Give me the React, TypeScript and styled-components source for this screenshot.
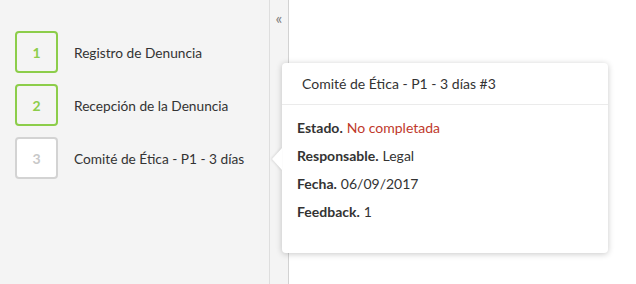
import React from 'react';
import styled, { createGlobalStyle } from 'styled-components';

const GlobalStyle = createGlobalStyle`
  html, body {
    margin: 0;
    padding: 0;
    height: 100%;
    background: #fff;
    font-family: Lato, 'Open Sans', sans-serif;
    color: #333;
  }
  #root {
    height: 100%;
  }
`;

const Page = styled.div`
  position: relative;
  display: flex;
  height: 284px;
  width: 636px;
  overflow: hidden;
`;

const SideBar = styled.div`
  width: 270px;
  background: #f4f4f4;
  border-right: 1px solid #dedede;
  padding: 31px 0 0 15px;
  box-sizing: border-box;
  display: flex;
  flex-direction: column;
  gap: 11px;
`;

const ToggleColumn = styled.div`
  width: 19px;
  background: #f4f4f4;
  border-right: 1px solid #d2d2d2;
  box-sizing: border-box;
  display: flex;
  justify-content: center;
  padding-top: 10px;
  color: #7a7a7a;
  font-size: 16px;
  line-height: 1;
`;

const Main = styled.div`
  flex: 1;
  background: #fff;
`;

const StepRow = styled.div`
  display: flex;
  align-items: center;
  gap: 16px;
`;

const StepBox = styled.div<{ $done: boolean }>`
  width: 43px;
  height: 42px;
  box-sizing: border-box;
  border: 2px solid ${(p) => (p.$done ? '#8ccd4a' : '#d3d3d3')};
  border-radius: 4px;
  background: ${(p) => (p.$done ? '#f4f4f4' : '#fff')};
  color: ${(p) => (p.$done ? '#8ccd4a' : '#c8c8c8')};
  display: flex;
  align-items: center;
  justify-content: center;
  font-size: 14px;
  font-weight: 700;
`;

const StepLabel = styled.span`
  font-size: 13.7px;
  color: #333;
`;

const Popover = styled.div`
  position: absolute;
  left: 282px;
  top: 63px;
  width: 326px;
  height: 190px;
  background: #fff;
  border-radius: 4px;
  box-shadow: 0 1px 6px rgba(0, 0, 0, 0.22);
  box-sizing: border-box;
`;

const Arrow = styled.div`
  position: absolute;
  left: -10px;
  top: 85px;
  width: 0;
  height: 0;
  border-top: 11px solid transparent;
  border-bottom: 11px solid transparent;
  border-right: 10px solid #fff;
  filter: drop-shadow(-1px 0 1px rgba(0, 0, 0, 0.12));
`;

const PopoverTitle = styled.div`
  padding: 0 20px;
  height: 41px;
  display: flex;
  align-items: center;
  border-bottom: 1px solid #ebebeb;
  font-size: 14px;
  color: #333;
`;

const PopoverBody = styled.div`
  padding: 8px 15px 0;
  display: flex;
  flex-direction: column;
`;

const InfoRow = styled.div`
  height: 28px;
  display: flex;
  align-items: center;
  font-size: 14px;
  color: #333;
  gap: 4px;
`;

const InfoLabel = styled.b`
  font-weight: 700;
`;

const InfoValue = styled.span<{ $alert?: boolean }>`
  color: ${(p) => (p.$alert ? '#c0392b' : '#333')};
`;

const steps = [
  { n: 1, label: 'Registro de Denuncia', done: true },
  { n: 2, label: 'Recepción de la Denuncia', done: true },
  { n: 3, label: 'Comité de Ética - P1 - 3 días', done: false },
];

const info = [
  { label: 'Estado.', value: 'No completada', alert: true },
  { label: 'Responsable.', value: 'Legal' },
  { label: 'Fecha.', value: '06/09/2017' },
  { label: 'Feedback.', value: '1' },
];

export default function App() {
  return (
    <>
      <GlobalStyle />
      <Page>
        <SideBar>
          {steps.map((s) => (
            <StepRow key={s.n}>
              <StepBox $done={s.done}>{s.n}</StepBox>
              <StepLabel>{s.label}</StepLabel>
            </StepRow>
          ))}
        </SideBar>
        <ToggleColumn>«</ToggleColumn>
        <Main />
        <Popover>
          <Arrow />
          <PopoverTitle>Comité de Ética - P1 - 3 días #3</PopoverTitle>
          <PopoverBody>
            {info.map((r) => (
              <InfoRow key={r.label}>
                <InfoLabel>{r.label}</InfoLabel>
                <InfoValue $alert={r.alert}>{r.value}</InfoValue>
              </InfoRow>
            ))}
          </PopoverBody>
        </Popover>
      </Page>
    </>
  );
}
